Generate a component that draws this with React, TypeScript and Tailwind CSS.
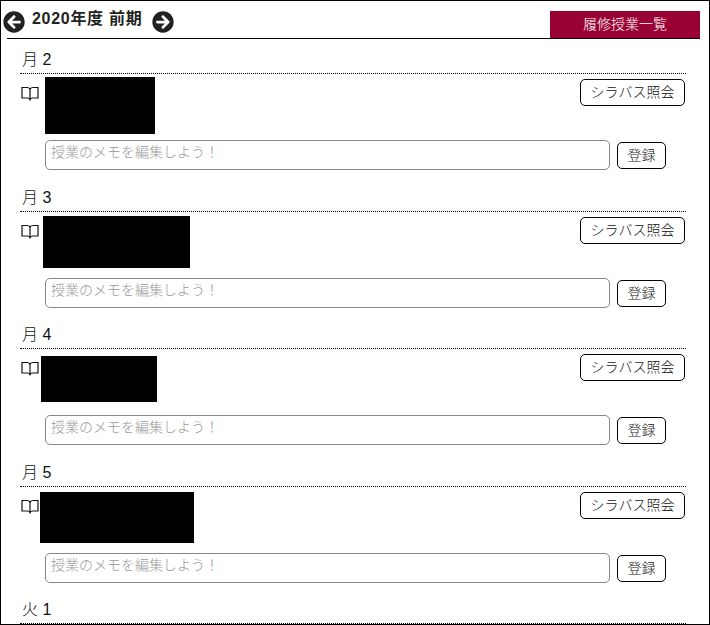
import React from 'react';
import { FaArrowCircleLeft, FaArrowCircleRight } from 'react-icons/fa';

type Lesson = {
  label: string;
  blockLeft: number;
  blockWidth: number;
  blockHeight: number;
  blockTop: number;
  gapBelow: number;
  bottom: number;
};

const lessons: Lesson[] = [
  { label: '月 2', blockLeft: 7, blockWidth: 110, blockHeight: 57, blockTop: 3, gapBelow: 6, bottom: 7 },
  { label: '月 3', blockLeft: 5, blockWidth: 147, blockHeight: 52, blockTop: 4, gapBelow: 10, bottom: 6 },
  { label: '月 4', blockLeft: 3, blockWidth: 116, blockHeight: 46, blockTop: 7, gapBelow: 13, bottom: 7 },
  { label: '月 5', blockLeft: 2, blockWidth: 154, blockHeight: 51, blockTop: 5, gapBelow: 10, bottom: 6 },
];

const BookIcon = () => (
  <svg width="18" height="15" viewBox="0 0 18 15" fill="none" stroke="#111" strokeWidth="1.2" className="shrink-0">
    <path d="M1 1.5 H6 Q8 1.5 9 3 Q10 1.5 12 1.5 H17 V12 H11.5 Q9.6 12 9 13.6 Q8.4 12 6.5 12 H1 Z" />
    <path d="M9 3 V13.6" />
  </svg>
);

const Section: React.FC<{ lesson: Lesson }> = ({ lesson }) => (
  <section className="pl-[19px] pr-[23px]" style={{ paddingBottom: lesson.bottom }}>
    <h2 className="h-[35px] pl-[2px] pt-[9px] border-b border-dotted border-black text-[16px] leading-[24px] font-light text-[#111]">
      {lesson.label}
    </h2>
    <div className="flex items-start justify-between">
      <div className="flex items-start">
        <div className="pt-[12px] pl-[1px]">
          <BookIcon />
        </div>
        <div
          className="bg-black"
          style={{
            marginTop: lesson.blockTop,
            marginLeft: lesson.blockLeft - 1,
            width: lesson.blockWidth,
            height: lesson.blockHeight,
          }}
        />
      </div>
      <button className="mr-[1px] mt-[5px] h-[27px] w-[105px] shrink-0 rounded-[5px] border border-black bg-white text-[14px] font-light text-[#111]">
        シラバス照会
      </button>
    </div>
    <div className="flex items-center pl-[25px]" style={{ marginTop: lesson.gapBelow }}>
      <div className="h-[30px] w-[565px] rounded-[5px] border border-[#888] pl-[5px] text-[14px] font-light leading-[22px] text-[#999]">
        授業のメモを編集しよう！
      </div>
      <button className="ml-[7px] h-[27px] w-[49px] rounded-[5px] border border-black bg-white text-[14px] font-light text-[#111]">
        登録
      </button>
    </div>
  </section>
);

export default function App() {
  return (
    <div className="h-[625px] w-[710px] overflow-hidden border border-black bg-white font-['Liberation_Sans','Noto_Sans_CJK_JP',sans-serif]">
      <header className="ml-[6px] mr-[9px] flex h-[38px] items-end border-b border-black">
        <div className="flex h-full flex-1 items-center pt-[5px]">
          <FaArrowCircleLeft className="-ml-[4px] text-[#222]" size={22} />
          <span className="ml-[7px] -mt-[7px] text-[16px] font-bold leading-[20px] tracking-[0.7px] text-[#222]">2020年度 前期</span>
          <FaArrowCircleRight className="ml-[10px] text-[#222]" size={22} />
        </div>
        <div className="flex h-[27px] w-[150px] items-center justify-center bg-[#990033] text-[14px] font-light text-white">
          履修授業一覧
        </div>
      </header>
      {lessons.map((lesson) => (
        <Section key={lesson.label} lesson={lesson} />
      ))}
      <section className="pl-[19px] pr-[23px]">
        <h2 className="h-[35px] pl-[2px] pt-[9px] border-b border-dotted border-black text-[16px] leading-[24px] font-light text-[#111]">
          火 1
        </h2>
      </section>
    </div>
  );
}
